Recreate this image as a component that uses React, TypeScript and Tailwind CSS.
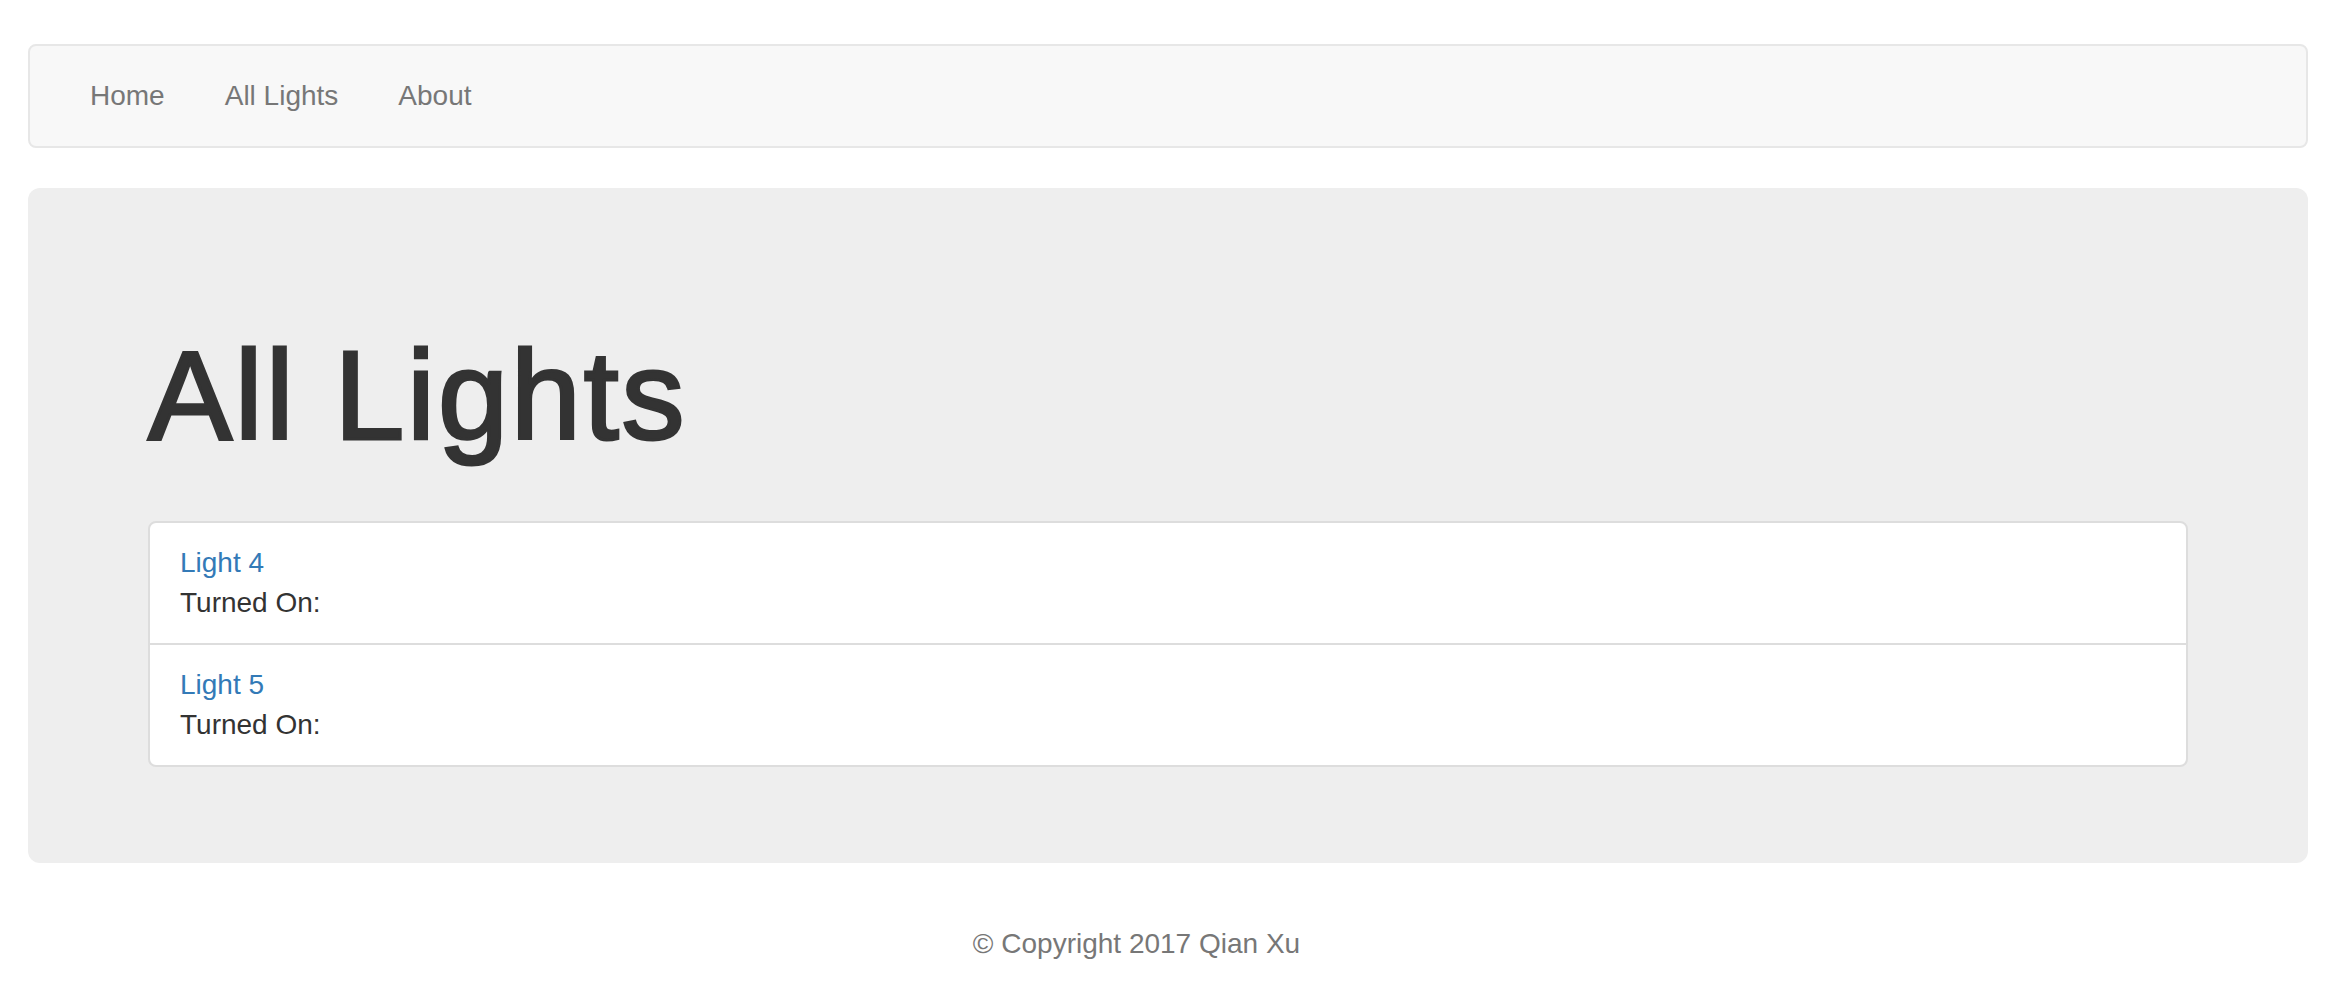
// All Lights page: navbar, jumbotron with light list, footer

const navLinks = ['Home', 'All Lights', 'About'];

const lights = [
  { id: 4, name: 'Light 4' },
  { id: 5, name: 'Light 5' },
];

const App = () => {
  return (
    <div className="min-h-[990px] bg-white text-[#333] text-[28px] leading-[40px] font-['Liberation_Sans',Arial,sans-serif] pt-[44px]">
      {/* Navbar */}
      <nav className="ml-[28px] mr-[32px] h-[104px] bg-[#f8f8f8] border-2 border-[#e7e7e7] rounded-[8px] px-[30px]">
        <ul className="flex">
          {navLinks.map((label) => (
            <li key={label}>
              <a href="#" className="block px-[30px] py-[30px] text-[#777] hover:text-[#333]">
                {label}
              </a>
            </li>
          ))}
        </ul>
      </nav>

      {/* Jumbotron */}
      <div className="ml-[28px] mr-[32px] mt-[40px] bg-[#eee] rounded-[12px] px-[120px] pt-[96px] pb-[96px]">
        {/* heading is Helvetica Neue medium in the original; thicken regular a little */}
        <h1 className="mt-[43px] mb-[56px] text-[126px] leading-[138px] font-normal text-[#333] tracking-[2.8px] [-webkit-text-stroke:3px_#333]">
          All Lights
        </h1>
        <div className="flex flex-col">
          {lights.map((light, index) => (
            <div
              key={light.id}
              className={`bg-white border-2 border-[#ddd] px-[30px] py-[20px] ${
                index === 0 ? 'rounded-t-[8px]' : '-mt-[2px]'
              } ${index === lights.length - 1 ? 'rounded-b-[8px]' : ''}`}
            >
              <a href="#" className="block text-[#337ab7] hover:underline">
                {light.name}
              </a>
              <div>Turned On:</div>
            </div>
          ))}
        </div>
      </div>

      {/* Footer */}
      <footer className="mt-[61px] flex justify-center pr-[67px] text-[#777]">
        <p>© Copyright 2017 Qian Xu</p>
      </footer>
    </div>
  );
};

export default App;
